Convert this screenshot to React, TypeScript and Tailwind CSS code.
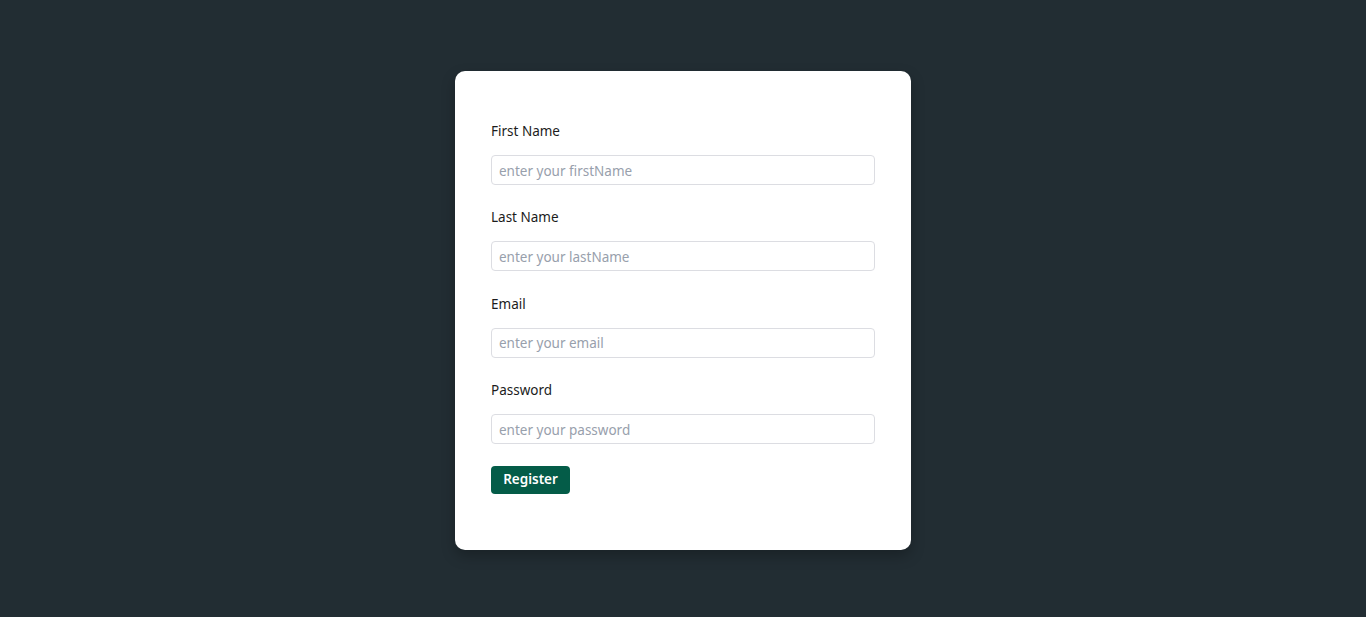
const fields = [
  { label: 'First Name', placeholder: 'enter your firstName', type: 'text' },
  { label: 'Last Name', placeholder: 'enter your lastName', type: 'text' },
  { label: 'Email', placeholder: 'enter your email', type: 'email' },
  { label: 'Password', placeholder: 'enter your password', type: 'password' },
];

export default function App() {
  return (
    <main className="min-h-screen bg-[#222d33] flex justify-center pt-[71px] font-['Noto_Sans',sans-serif]">
      <div className="w-[456px] h-[479px] bg-white rounded-[10px] shadow-[0_6px_14px_rgba(0,0,0,0.25)] px-[36px] pt-[50px]">
        <form className="flex flex-col" onSubmit={(e) => e.preventDefault()}>
          {fields.map((f) => (
            <div key={f.label} className="flex flex-col mb-[22.4px]">
              <label className="text-[13.5px] leading-[20px] text-[#1c1c1c] mb-[14px]">{f.label}</label>
              <input
                type={f.type}
                placeholder={f.placeholder}
                className="h-[30px] w-full rounded-[4px] border border-[#dcdde2] pl-[7px] pr-[8px] pt-px text-[13.5px] text-[#222] placeholder:text-[#98a0ac] outline-none"
              />
            </div>
          ))}
          <div className="-mt-px">
            <button
              type="submit"
              className="h-[28px] w-[79px] rounded-[4px] bg-[#045c48] text-white text-[13.5px] font-semibold"
            >
              Register
            </button>
          </div>
        </form>
      </div>
    </main>
  );
}
